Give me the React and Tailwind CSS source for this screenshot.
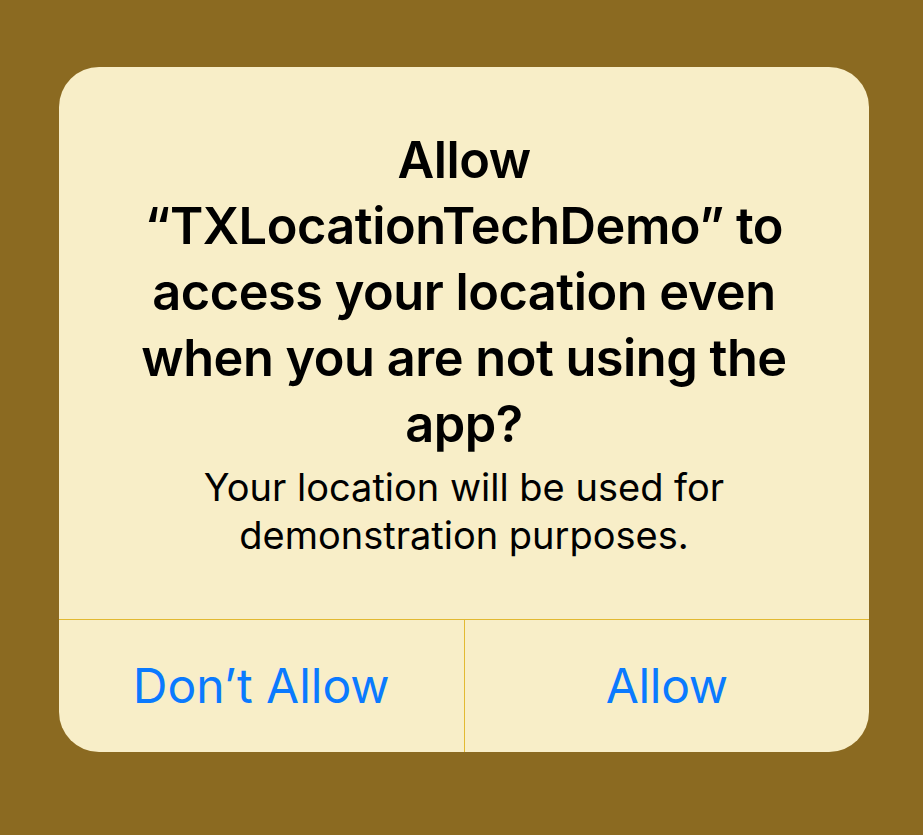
export default function App() {
  const title = ['Allow', '\u201CTXLocationTechDemo\u201D to', 'access your location even', 'when you are not using the', 'app?']
  const message = ['Your location will be used for', 'demonstration purposes.']

  return (
    <div
      className="w-[923px] h-[835px] bg-[#8b6a21] pt-[67px] pl-[59px]"
      style={{ fontFamily: 'Inter, "Noto Sans", sans-serif' }}
    >
      <div className="w-[810px] h-[685px] rounded-[40px] bg-[#f8eec8] flex flex-col overflow-hidden">
        <div className="flex-1 flex flex-col items-center pt-[60px] px-[40px]">
          <div className="text-black text-[50.5px] leading-[66px] font-semibold text-center tracking-[-0.5px]">
            {title.map((line) => (
              <div key={line} className="whitespace-nowrap">{line}</div>
            ))}
          </div>
          <div className="mt-[6px] text-black text-[38px] leading-[48px] text-center">
            {message.map((line) => (
              <div key={line} className="whitespace-nowrap">{line}</div>
            ))}
          </div>
        </div>

        <div className="h-[133px] border-t border-[#e2b931] flex">
          <button className="flex-1 flex items-center justify-center text-[#0a7aff] text-[48px] border-r border-[#e2b931]">
            Don&rsquo;t Allow
          </button>
          <button className="flex-1 flex items-center justify-center text-[#0a7aff] text-[48px] tracking-[-0.3px]">
            Allow
          </button>
        </div>
      </div>
    </div>
  )
}
